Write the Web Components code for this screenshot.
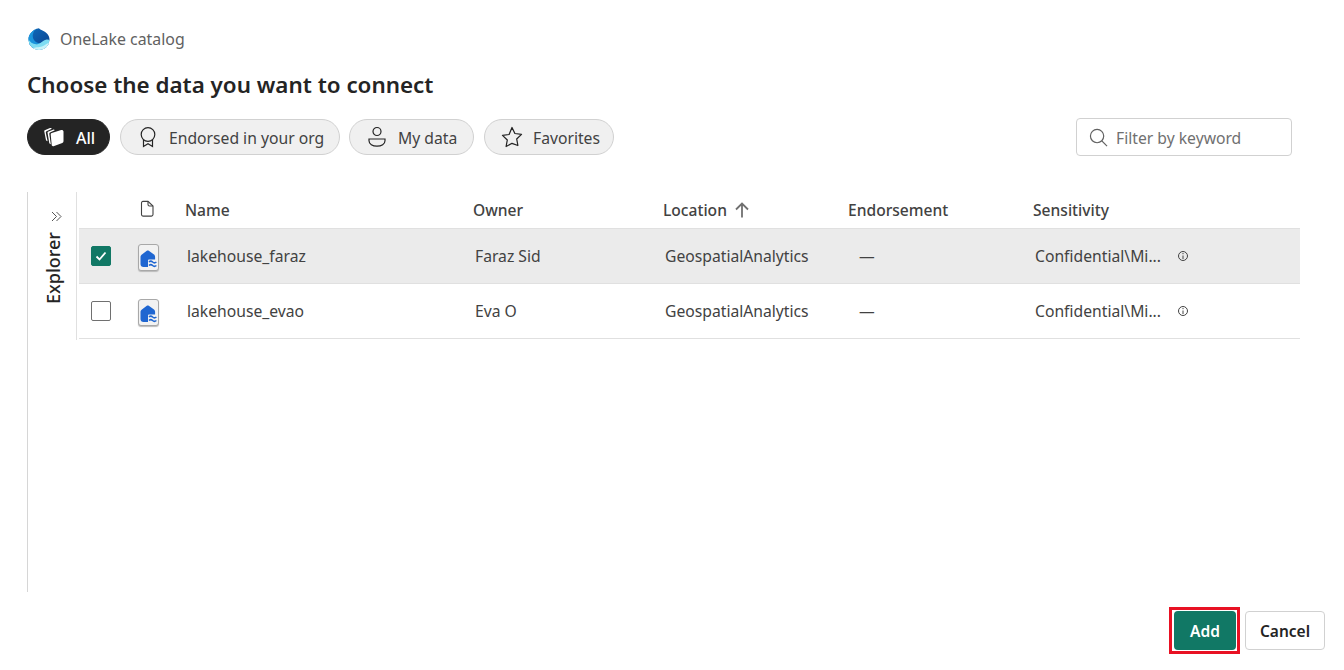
<!DOCTYPE html>
<html lang="en"><head><meta charset="utf-8"><title>OneLake catalog</title>
<style>
html,body{margin:0;padding:0;background:#fff;font-family:"Noto Sans","Open Sans",sans-serif;color:#242424}
</style></head><body>
<catalog-dialog>
  <catalog-header slot="header">OneLake catalog</catalog-header>
  <h-title slot="title">Choose the data you want to connect</h-title>
  <filter-chip slot="chips" icon="all" active>All</filter-chip>
  <filter-chip slot="chips" icon="ribbon" style="width:220px;margin-right:-1px">Endorsed in your org</filter-chip>
  <filter-chip slot="chips" icon="person" style="width:125px">My data</filter-chip>
  <filter-chip slot="chips" icon="star" style="width:130px">Favorites</filter-chip>
  <search-box slot="search">Filter by keyword</search-box>
  <explorer-rail slot="rail"></explorer-rail>
  <table-head slot="table"></table-head>
  <data-row slot="table" selected name="lakehouse_faraz" owner="Faraz Sid" location="GeospatialAnalytics" sens="Confidential\Mi..."></data-row>
  <data-row slot="table" name="lakehouse_evao" owner="Eva O" location="GeospatialAnalytics" sens="Confidential\Mi..."></data-row>
  <dialog-button slot="footer" primary marked>Add</dialog-button>
  <dialog-button slot="footer">Cancel</dialog-button>
</catalog-dialog>
<script>
const def=(n,html)=>customElements.define(n,class extends HTMLElement{connectedCallback(){if(this.shadowRoot)return;const r=this.attachShadow({mode:'open'});r.innerHTML=typeof html==='function'?html(this):html;}});
const ICONS={
all:`<svg width="20" height="20" viewBox="0 0 20 20"><path d="M.3 4.500C.1 3.700.5 3.200 1.300 2.900L6 1.100c.8-.3 1.500-.1 1.800.6L2.500 4.300c-.6.300-.8.800-.7 1.400l1.800 8.500c-.9-.1-1.500-.6-1.700-1.400z" fill="#fff"/><path d="M3.600 6.100c-.2-.8.200-1.300.9-1.600L9 2.700c.8-.3 1.500-.1 1.800.6L6 5.600c-.6.300-.8.800-.7 1.400l1.500 10.200c-.9-.1-1.400-.6-1.600-1.400z" fill="#fff"/><path d="M6.700 7.400c-.1-.8.300-1.300 1-1.500l9.500-2.800c1.100-.3 2.300.4 2.300 1.500v9.700c0 .8-.4 1.300-1.200 1.600l-8.800 3.300c-1 .3-1.700-.2-1.800-1.100z" fill="#fff"/></svg>`,
ribbon:`<svg width="22" height="22" viewBox="0 0 22 22" fill="none" stroke="#242424" stroke-width="1.2"><circle cx="11" cy="8.500" r="6.800"/><path d="M6.500 14v6.500l4.500-2.700 4.500 2.700V14"/></svg>`,
person:`<svg width="22" height="22" viewBox="0 0 22 22" fill="none" stroke="#242424" stroke-width="1.2"><circle cx="11" cy="5.500" r="4"/><path d="M3 13h16v1.800c0 3.200-3.500 5.400-8 5.400s-8-2.200-8-5.400z"/></svg>`,
star:`<svg width="22" height="22" viewBox="0 0 22 22" fill="none" stroke="#242424" stroke-width="1.25" stroke-linejoin="round"><path d="M11 1.500l2.900 6 6.600.9-4.800 4.600 1.200 6.500L11 17.300l-5.900 3.200 1.200-6.500-4.800-4.600 6.600-.9z"/></svg>`};
def('catalog-dialog',`<style>
:host{display:flex;flex-direction:column;width:1344px;height:670px;box-sizing:border-box;padding:28px 19px 16px 27px;overflow:hidden}
.top{display:flex;justify-content:space-between;align-items:center;margin-top:17px;padding-right:33px;height:38px}
.chips{display:flex;gap:10px}
.body{display:flex;margin-top:36px;height:400px;flex:none}
.tbl{flex:1;height:148px;margin-right:25px;min-width:0}
.foot{display:flex;justify-content:flex-end;gap:5px;align-items:center;margin-top:15px}
</style><slot name="header"></slot><slot name="title"></slot>
<div class="top"><div class="chips"><slot name="chips"></slot></div><slot name="search"></slot></div>
<div class="body"><slot name="rail"></slot><div class="tbl"><slot name="table"></slot></div></div>
<div class="foot"><slot name="footer"></slot></div>`);
def('catalog-header',`<style>:host{display:flex;align-items:center;gap:10px;height:22px;font-size:15.9px;color:#616161;padding-left:1px}</style>
<svg width="22" height="22" viewBox="0 0 22 22"><defs><linearGradient id="a" x1="0" y1="0" x2="1" y2="1"><stop offset="0" stop-color="#0f6cbd"/><stop offset="1" stop-color="#0a3f8c"/></linearGradient><clipPath id="d"><path d="M11 .3c.8 1 2 1.500 3.500 2.300 3.800 1.800 7 4.700 7 8.900a10.500 10.500 0 0 1-21 0C.5 6.500 4.500 1.500 11 .3z"/></clipPath></defs>
<g clip-path="url(#d)"><rect width="22" height="22" fill="url(#a)"/>
<path d="M9 0C5 3 3.500 8 6 12c1.500 2.300 4 3.500 7 3.500L0 18V0z" fill="#1a94dc"/>
<path d="M0 10.500C2 14.500 6 17 10 16c3.500-.9 5.500-4 8.500-4.500 1.400-.2 2.700.1 3.500.8V22H0z" fill="#7ddcf2"/>
<path d="M3 21.500c4-3 8-1.800 11-3 3-1.200 5-3 8-4.500v8H3z" fill="#c9f3f9"/></g></svg><slot></slot>`);
def('h-title',`<style>:host{display:block;margin-top:19px;font-size:22.4px;line-height:32px;font-weight:600;color:#242424}</style><slot></slot>`);
def('filter-chip',h=>{const a=h.hasAttribute('active');return `<style>:host{display:inline-flex;align-items:center;box-sizing:border-box;height:36px;border-radius:18px;padding:2px 0 0 16px;gap:${a?12:10}px;font-size:${a?16:15.7}px;white-space:nowrap;border:1px solid ${a?'#242424':'#d1d1d1'};background:${a?'#242424':'#f0f0f0'};color:${a?'#fff':'#424242'};${a?'width:83px;font-weight:500':''}}svg{display:block;margin-top:-2px}</style>${ICONS[h.getAttribute('icon')]}<slot></slot>`});
def('search-box',`<style>:host{display:flex;align-items:center;gap:8px;box-sizing:border-box;width:216px;height:38px;border:1px solid #d1d1d1;border-radius:4px;padding:2px 0 0 12px;font-size:15.7px;color:#707070}svg{margin-top:-2px}</style>
<svg width="19" height="19" viewBox="0 0 20 20" fill="none" stroke="#616161" stroke-width="1.250"><circle cx="8.500" cy="8.500" r="7"/><path d="M13.500 13.500L19 19"/></svg><slot></slot>`);
def('explorer-rail',`<style>:host{display:flex;flex-direction:column;align-items:center;box-sizing:border-box;width:52px;height:400px;border-left:1px solid #d6d6d6;position:relative}
.line{position:absolute;right:2px;top:0;height:148px;width:1px;background:#e0e0e0}
svg{margin-top:19px;margin-left:6px}
.t{writing-mode:vertical-rl;transform:rotate(180deg);font-size:18px;font-weight:500;color:#242424;margin-top:10px;margin-right:1px;line-height:24px}</style>
<div class="line"></div><svg width="11" height="11" viewBox="0 0 11 11" fill="none" stroke="#424242" stroke-width=".9"><path d="M1 1l4.500 4.500L1 10M5.500 1L10 5.500 5.500 10"/></svg><div class="t">Explorer</div>`);
const GRID='display:grid;grid-template-columns:59px 47px 288px 190px 185px 185px 1fr;align-items:center;';
def('table-head',`<style>:host{${GRID}height:37px;border-bottom:1px solid #e0e0e0;box-sizing:border-box;font-size:15.6px;font-weight:500;color:#424242}
.l{display:flex;align-items:center;gap:7px}svg{display:block}</style>
<span></span><svg width="15" height="18" viewBox="0 0 15 18" fill="none" stroke="#424242" stroke-width="1.1" style="margin-left:2px;margin-top:-3px"><path d="M1.500 3c0-1 .6-1.600 1.500-1.600h5L13 6v8.500c0 1-.7 1.600-1.600 1.600H3c-.9 0-1.500-.6-1.500-1.600z"/><path d="M8 1.500V4.500c0 1 .6 1.500 1.500 1.500h3.500"/></svg>
<span>Name</span><span>Owner</span><span class="l">Location<svg width="16" height="16" viewBox="0 0 16 16" fill="none" stroke="#707070" stroke-width="1.800"><path d="M8 15.500V2M2 7.500L8 1.500l6 6"/></svg></span><span>Endorsement</span><span>Sensitivity</span>`);
def('data-row',h=>{const s=h.hasAttribute('selected'),g=k=>h.getAttribute(k);return `<style>:host{${GRID}height:55px;box-sizing:border-box;border-bottom:1px solid #e0e0e0;font-size:15.7px;color:#424242;background:${s?'#ebebeb':'#fff'}}
.c{box-sizing:border-box;width:20px;height:20px;margin-left:12px;border-radius:2px;border:1px solid ${s?'#117865':'#707070'};background:${s?'#117865':'#fff'};display:flex;align-items:center;justify-content:center}
.i{width:21px;height:27px;margin-top:2px;margin-left:0;box-sizing:border-box;border:1px solid #a8a8a8;border-radius:3px;background:#f2f2f2;display:flex;align-items:flex-end;justify-content:center;box-shadow:0 1px 1px #bbb}
.t{padding-left:2px}.d{padding-left:11px}.se{padding-left:2px;display:flex;align-items:center;gap:16px}svg{display:block}</style>
<div class="c">${s?'<svg width="12" height="10" viewBox="0 0 12 10" fill="none" stroke="#fff" stroke-width="1.8"><path d="M1.500 5.500l3 3L10.500 1.500"/></svg>':''}</div>
<div class="i"><svg width="17" height="18" viewBox="0 0 17 18" style="margin-bottom:2px"><path d="M6.800.8c.6-.4 1.400-.4 2 0l5.200 3.800c.7.500 1.100 1.200 1.100 2.100V9.500H9.200c-.7 0-1.200.5-1.200 1.200V17H3.500C1.700 17 .5 15.800.5 14V6.800c0-.9.400-1.600 1.100-2.100z" fill="#1f66d1"/><g fill="none" stroke="#1f66d1" stroke-width="1.500"><path d="M9 12c1.200-1.200 2.400-1.200 3.600 0s2.400 1.200 3.800 0M9 15.500c1.200-1.200 2.400-1.200 3.600 0s2.400 1.200 3.800 0"/></g></svg></div>
<span class="t">${g('name')}</span><span class="t">${g('owner')}</span><span class="t">${g('location')}</span><span class="d">—</span>
<span class="se">${g('sens')}<svg width="12" height="12" viewBox="0 0 12 12" fill="none" stroke="#424242"><circle cx="6" cy="6" r="4.500"/><path d="M6 5.500V9M6 3v1.200"/></svg></span>`});
def('dialog-button',h=>{const p=h.hasAttribute('primary');
const base='display:inline-flex;align-items:center;justify-content:center;box-sizing:border-box;height:39px;border-radius:4px;font-size:15.5px;font-weight:600;';
return p?`<style>:host{display:block;box-sizing:border-box;border:3px solid #e81123;padding:1px 1px 1px 2px;height:47px;width:71px}.b{${base}width:62px;background:#117865;color:#fff}</style><div class="b"><slot></slot></div>`
:`<style>:host{${base}width:80px;background:#fff;color:#242424;border:1px solid #d1d1d1}</style><slot></slot>`});
</script></body></html>
